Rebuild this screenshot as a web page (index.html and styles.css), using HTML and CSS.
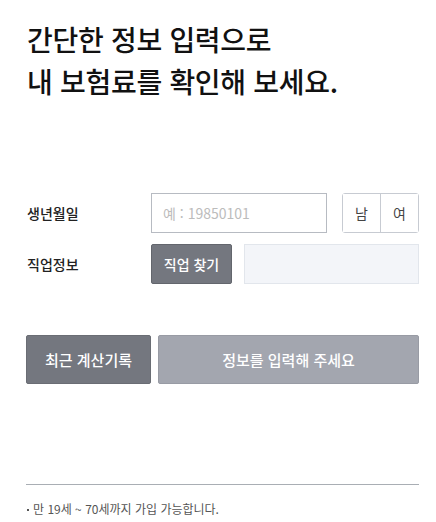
FILE: index.html
```html
<!DOCTYPE html>
<html lang="ko">

<head>
  <meta charset="UTF-8">
  <meta name="viewport" content="width=device-width, initial-scale=1.0">
  <title>보험료 계산</title>
  <link rel="stylesheet" href="styles.css">
</head>

<body>
  <div class="calc">
    <h1 class="title">간단한 정보 입력으로<br>내 보험료를 확인해 보세요.</h1>

    <div class="form">
      <div class="row">
        <label class="label" for="birth">생년월일</label>
        <input class="birth" id="birth" type="text" placeholder="예 : 19850101">
        <div class="gender">
          <button class="gender-btn">남</button>
          <button class="gender-btn">여</button>
        </div>
      </div>
      <div class="row">
        <span class="label">직업정보</span>
        <button class="job-btn">직업 찾기</button>
        <input class="job" type="text" readonly>
      </div>
    </div>

    <div class="actions">
      <button class="btn-history">최근 계산기록</button>
      <button class="btn-submit" disabled>정보를 입력해 주세요</button>
    </div>

    <div class="notice">
      <ul>
        <li>만 19세 ~ 70세까지 가입 가능합니다.</li>
      </ul>
    </div>
  </div>
</body>

</html>
```

FILE: styles.css
```css
body {
  margin: 0;
  font-family: "Noto Sans CJK KR", "Noto Sans", sans-serif;
  background-color: #fff;
  color: #111;
}

button,
input {
  font-family: inherit;
}

.calc {
  padding: 18px 17px 0 26px;
}

.title {
  margin: 0;
  font-size: 28px;
  line-height: 42px;
  font-weight: 500;
  letter-spacing: -0.3px;
  padding-left: 1px;
}

.form {
  margin-top: 91px;
  display: flex;
  flex-direction: column;
  gap: 11px;
}

.row {
  display: flex;
  align-items: center;
  height: 40px;
}

.label {
  width: 125px;
  flex-shrink: 0;
  font-size: 14px;
  font-weight: 500;
  color: #222;
  padding-left: 1px;
  box-sizing: border-box;
}

.birth {
  width: 176px;
  height: 40px;
  box-sizing: border-box;
  border: 1px solid #b7bbc2;
  border-radius: 0;
  padding: 0 11px;
  font-size: 14px;
  color: #333;
  outline: none;
}

.birth::placeholder {
  color: #bcbcbc;
}

.gender {
  margin-left: 15px;
  flex: 1;
  display: flex;
  height: 40px;
  box-sizing: border-box;
  border: 1px solid #c7cbd2;
  border-radius: 3px;
}

.gender-btn {
  flex: 1;
  border: 0;
  background: #fff;
  font-size: 14px;
  color: #444;
  padding: 0;
}

.gender-btn + .gender-btn {
  border-left: 1px solid #c7cbd2;
}

.job-btn {
  width: 81px;
  height: 40px;
  border: 1px solid #63666d;
  border-radius: 2px;
  background: #74777f;
  color: #fff;
  font-size: 14px;
  font-weight: 500;
  padding: 0;
}

.job {
  margin-left: 12px;
  flex: 1;
  min-width: 0;
  height: 40px;
  box-sizing: border-box;
  border: 1px solid #e2e6ec;
  background: #f3f5f9;
  outline: none;
}

.actions {
  margin-top: 51px;
  display: flex;
  gap: 7px;
}

.actions button {
  height: 49px;
  border-radius: 2px;
  color: #fff;
  font-size: 15px;
  font-weight: 500;
  padding: 0;
}

.btn-history {
  width: 125px;
  border: 1px solid #6a6d74;
  background: #74777f;
}

.btn-submit {
  flex: 1;
  border: 1px solid #989ba4;
  background: #a3a6af;
}

.notice {
  margin-top: 100px;
  border-top: 1px solid #a9aeb4;
  padding-top: 15px;
}

.notice ul {
  list-style: none;
  margin: 0;
  padding: 0;
}

.notice li {
  position: relative;
  padding-left: 7px;
  font-size: 12px;
  color: #555;
}

.notice li::before {
  content: "";
  position: absolute;
  left: 1px;
  top: 9px;
  width: 2px;
  height: 2px;
  background: #555;
}
```
